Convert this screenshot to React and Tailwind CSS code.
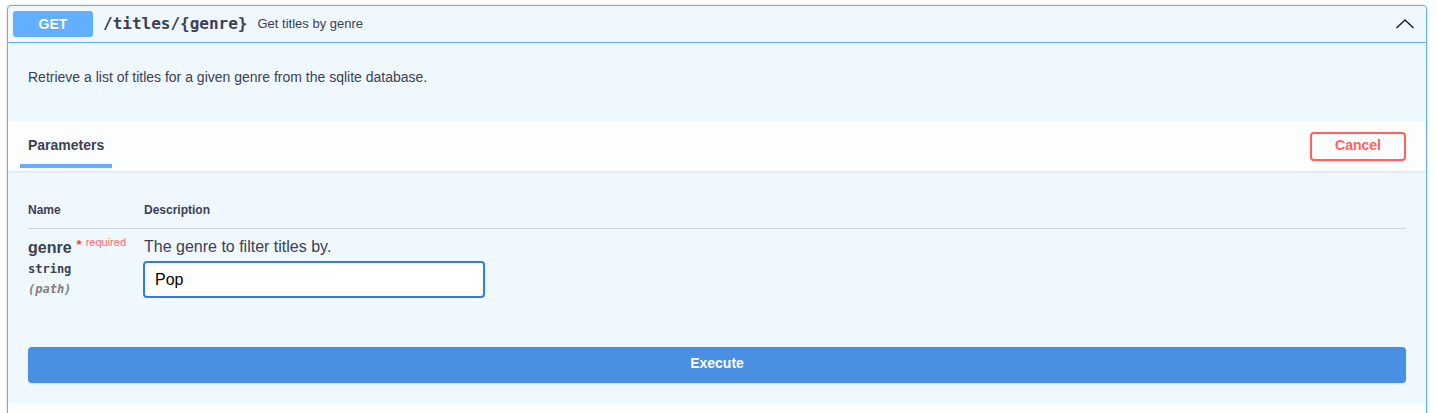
import React from "react";

const sans = { fontFamily: '"Liberation Sans", Arial, Helvetica, sans-serif' };
const mono = { fontFamily: '"DejaVu Sans Mono", "Liberation Mono", monospace' };

export default function App() {
  return (
    <div className="w-full min-h-[413px] bg-white pl-[7px] pr-[10px] pt-[5px] text-[#3b4151]" style={sans}>
      <div className="rounded-[4px] border border-[#61affe] bg-[#61affe]/10 shadow-[0_0_3px_rgba(0,0,0,0.19)] overflow-hidden">
        {/* summary */}
        <div className="flex items-center border-b border-[#61affe] p-[5px] h-[37px]">
          <span
            className="flex h-[26px] w-[80px] items-center justify-center rounded-[3px] bg-[#61affe] text-[14px] font-bold text-white [text-shadow:0_1px_0_rgba(0,0,0,0.1)]"
          >
            GET
          </span>
          <span className="px-[10px] text-[16px] font-bold text-[#3b4151]" style={mono}>
            /titles/{"{genre}"}
          </span>
          <span className="text-[13px] text-[#3b4151]">Get titles by genre</span>
          <div className="ml-auto mr-[6px] flex items-center">
            <svg width="20" height="20" viewBox="0 0 20 20" fill="none">
              <polyline points="1.5,14 10,6 18.5,14" stroke="#222" strokeWidth="1.5" />
            </svg>
          </div>
        </div>

        {/* description */}
        <div className="h-[78px] px-[20px] pt-[26px]">
          <p className="text-[14px] leading-[16px] text-[#3b4151]">
            Retrieve a list of titles for a given genre from the sqlite database.
          </p>
        </div>

        {/* section header */}
        <div className="flex h-[50px] items-stretch bg-white/80 pl-[12px] pr-[20px] shadow-[0_1px_2px_rgba(0,0,0,0.1)]">
          <div className="flex items-end pb-[3px]">
            <div className="flex h-[47px] flex-col justify-between">
              <span className="px-[8px] pt-[16px] text-[14px] font-bold leading-[17px] text-[#3b4151]">Parameters</span>
              <span className="block h-[4px] w-full bg-[#61affe]"></span>
            </div>
          </div>
          <div className="ml-auto flex items-center">
            <button className="h-[29px] w-[96px] rounded-[4px] border-2 border-[#ff6060] bg-transparent pb-[2px] text-[14px] font-bold text-[#ff6060] shadow-[0_1px_2px_rgba(0,0,0,0.1)]">
              Cancel
            </button>
          </div>
        </div>

        {/* parameters */}
        <div className="px-[20px] pt-[20px] pb-[20px]">
          <div className="flex border-b border-[#3b4151]/20 pt-[12px] pb-[11px] text-[12px] font-bold leading-[14px]">
            <div className="w-[116px]">Name</div>
            <div>Description</div>
          </div>
          <div className="flex pt-[9px]">
            <div className="w-[116px]">
              <div className="flex items-start">
                <span className="text-[16px] font-bold leading-[19px]">genre</span>
                <span className="ml-[5px] text-[13px] font-bold leading-[13px] text-[#f93e3e]">*</span>
                <span className="ml-[4px] -mt-[2px] text-[11px] leading-[12px] text-[#ff0000]/60">required</span>
              </div>
              <div className="mt-[5px] text-[12px] font-bold leading-[14px] text-[#3b4151]" style={mono}>
                string
              </div>
              <div className="mt-[6px] text-[12px] font-bold italic leading-[14px] text-[#808080]" style={mono}>
                (path)
              </div>
            </div>
            <div className="flex flex-col">
              <span className="text-[16px] leading-[18px] text-[#3b4151]">The genre to filter titles by.</span>
              <input
                className="mt-[5px] -ml-[1px] h-[37px] w-[342px] rounded-[4px] border-2 border-[#2f7de1] bg-white px-[10px] text-[16px] text-black outline-none"
                style={sans}
                defaultValue="Pop"
              />
            </div>
          </div>
          <button className="mt-[49px] h-[36px] w-full rounded-[4px] bg-[#4990e2] pb-[3px] text-[14px] font-bold text-white shadow-[0_1px_2px_rgba(0,0,0,0.1)]">
            Execute
          </button>
        </div>

        <div className="h-[40px] bg-white/80"></div>
      </div>
    </div>
  );
}
